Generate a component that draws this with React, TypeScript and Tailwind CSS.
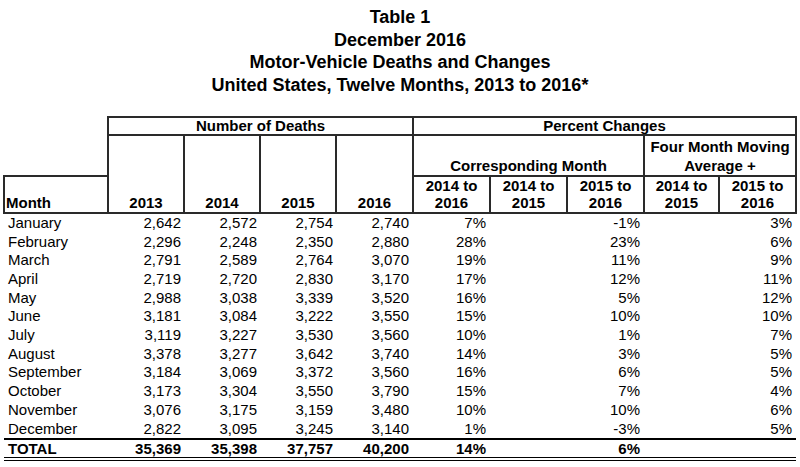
import React from "react";

const rows: [string, string, string, string, string, string, string, string][] = [
  ["January", "2,642", "2,572", "2,754", "2,740", "7%", "-1%", "3%"],
  ["February", "2,296", "2,248", "2,350", "2,880", "28%", "23%", "6%"],
  ["March", "2,791", "2,589", "2,764", "3,070", "19%", "11%", "9%"],
  ["April", "2,719", "2,720", "2,830", "3,170", "17%", "12%", "11%"],
  ["May", "2,988", "3,038", "3,339", "3,520", "16%", "5%", "12%"],
  ["June", "3,181", "3,084", "3,222", "3,550", "15%", "10%", "10%"],
  ["July", "3,119", "3,227", "3,530", "3,560", "10%", "1%", "7%"],
  ["August", "3,378", "3,277", "3,642", "3,740", "14%", "3%", "5%"],
  ["September", "3,184", "3,069", "3,372", "3,560", "16%", "6%", "5%"],
  ["October", "3,173", "3,304", "3,550", "3,790", "15%", "7%", "4%"],
  ["November", "3,076", "3,175", "3,159", "3,480", "10%", "10%", "6%"],
  ["December", "2,822", "3,095", "3,245", "3,140", "1%", "-3%", "5%"],
];

const bd = "border-2 border-[#2a2a2a]";

export default function App() {
  return (
    <div
      className="w-[800px] h-[467px] bg-white text-black overflow-hidden"
      style={{ fontFamily: '"Liberation Sans", Arial, sans-serif' }}
    >
      <div className="pt-[6px] text-center font-bold text-[18px] leading-[22.7px]">
        <div>Table 1</div>
        <div>December 2016</div>
        <div>Motor-Vehicle Deaths and Changes</div>
        <div>United States, Twelve Months, 2013 to 2016*</div>
      </div>
      <table className="mt-[19px] ml-[3px] w-[792px] table-fixed border-collapse text-[15px]">
        <colgroup>
          <col className="w-[104px]" />
          <col className="w-[76px]" />
          <col className="w-[76px]" />
          <col className="w-[76px]" />
          <col className="w-[77px]" />
          <col className="w-[77px]" />
          <col className="w-[77px]" />
          <col className="w-[77px]" />
          <col className="w-[75px]" />
          <col className="w-[77px]" />
        </colgroup>
        <thead className="font-bold">
          <tr className="h-[18px] leading-[16px]">
            <td className="p-0" />
            <th colSpan={4} className={`${bd} p-0 text-center`}>
              Number of Deaths
            </th>
            <th colSpan={5} className={`${bd} p-0 text-center`}>
              Percent Changes
            </th>
          </tr>
          <tr className="h-[41px] leading-[19px]">
            <td className="p-0" />
            {["2013", "2014", "2015", "2016"].map((y) => (
              <th key={y} rowSpan={2} className={`${bd} p-0 text-center align-bottom`}>
                {y}
              </th>
            ))}
            <th colSpan={3} className={`${bd} p-0 text-center align-bottom`}>
              Corresponding Month
            </th>
            <th colSpan={2} className={`${bd} p-0 text-center align-bottom whitespace-nowrap`}>
              Four Month Moving
              <br />
              Average +
            </th>
          </tr>
          <tr className="h-[33px] leading-[17.5px]">
            <th className={`${bd} p-0 pl-[1px] text-left align-bottom`}>Month</th>
            {[
              ["2014 to", "2016"],
              ["2014 to", "2015"],
              ["2015 to", "2016"],
              ["2014 to", "2015"],
              ["2015 to", "2016"],
            ].map(([a, b], i) => (
              <th key={i} className={`${bd} p-0 text-center align-bottom whitespace-nowrap`}>
                {a}
                <br />
                {b}
              </th>
            ))}
          </tr>
        </thead>
        <tbody>
          {rows.map((r) => (
            <tr key={r[0]} className="h-[18.7px] leading-[18.7px]">
              <td className="p-0 pl-[4px] text-left">{r[0]}</td>
              <td className="p-0 pr-[3px] text-right">{r[1]}</td>
              <td className="p-0 pr-[3px] text-right">{r[2]}</td>
              <td className="p-0 pr-[3px] text-right">{r[3]}</td>
              <td className="p-0 pr-[4px] text-right">{r[4]}</td>
              <td className="p-0 pr-[4px] text-right">{r[5]}</td>
              <td className="p-0" />
              <td className="p-0 pr-[4px] text-right">{r[6]}</td>
              <td className="p-0" />
              <td className="p-0 pr-[4px] text-right">{r[7]}</td>
            </tr>
          ))}
          <tr className="h-[16px] leading-[17px] font-bold">
            {[
              ["TOTAL", "left"],
              ["35,369", "r3"],
              ["35,398", "r3"],
              ["37,757", "r3"],
              ["40,200", "r4"],
              ["14%", "r4"],
              ["", "r4"],
              ["6%", "r4"],
              ["", "r4"],
              ["", "r4"],
            ].map(([t, a], i) => (
              <td
                key={i}
                className={`p-0 border-t-2 border-t-black border-b-4 border-b-black border-double ${
                  a === "left" ? "pl-[4px] text-left" : a === "r3" ? "pr-[3px] text-right" : "pr-[4px] text-right"
                }`}
              >
                {t}
              </td>
            ))}
          </tr>
        </tbody>
      </table>
    </div>
  );
}
